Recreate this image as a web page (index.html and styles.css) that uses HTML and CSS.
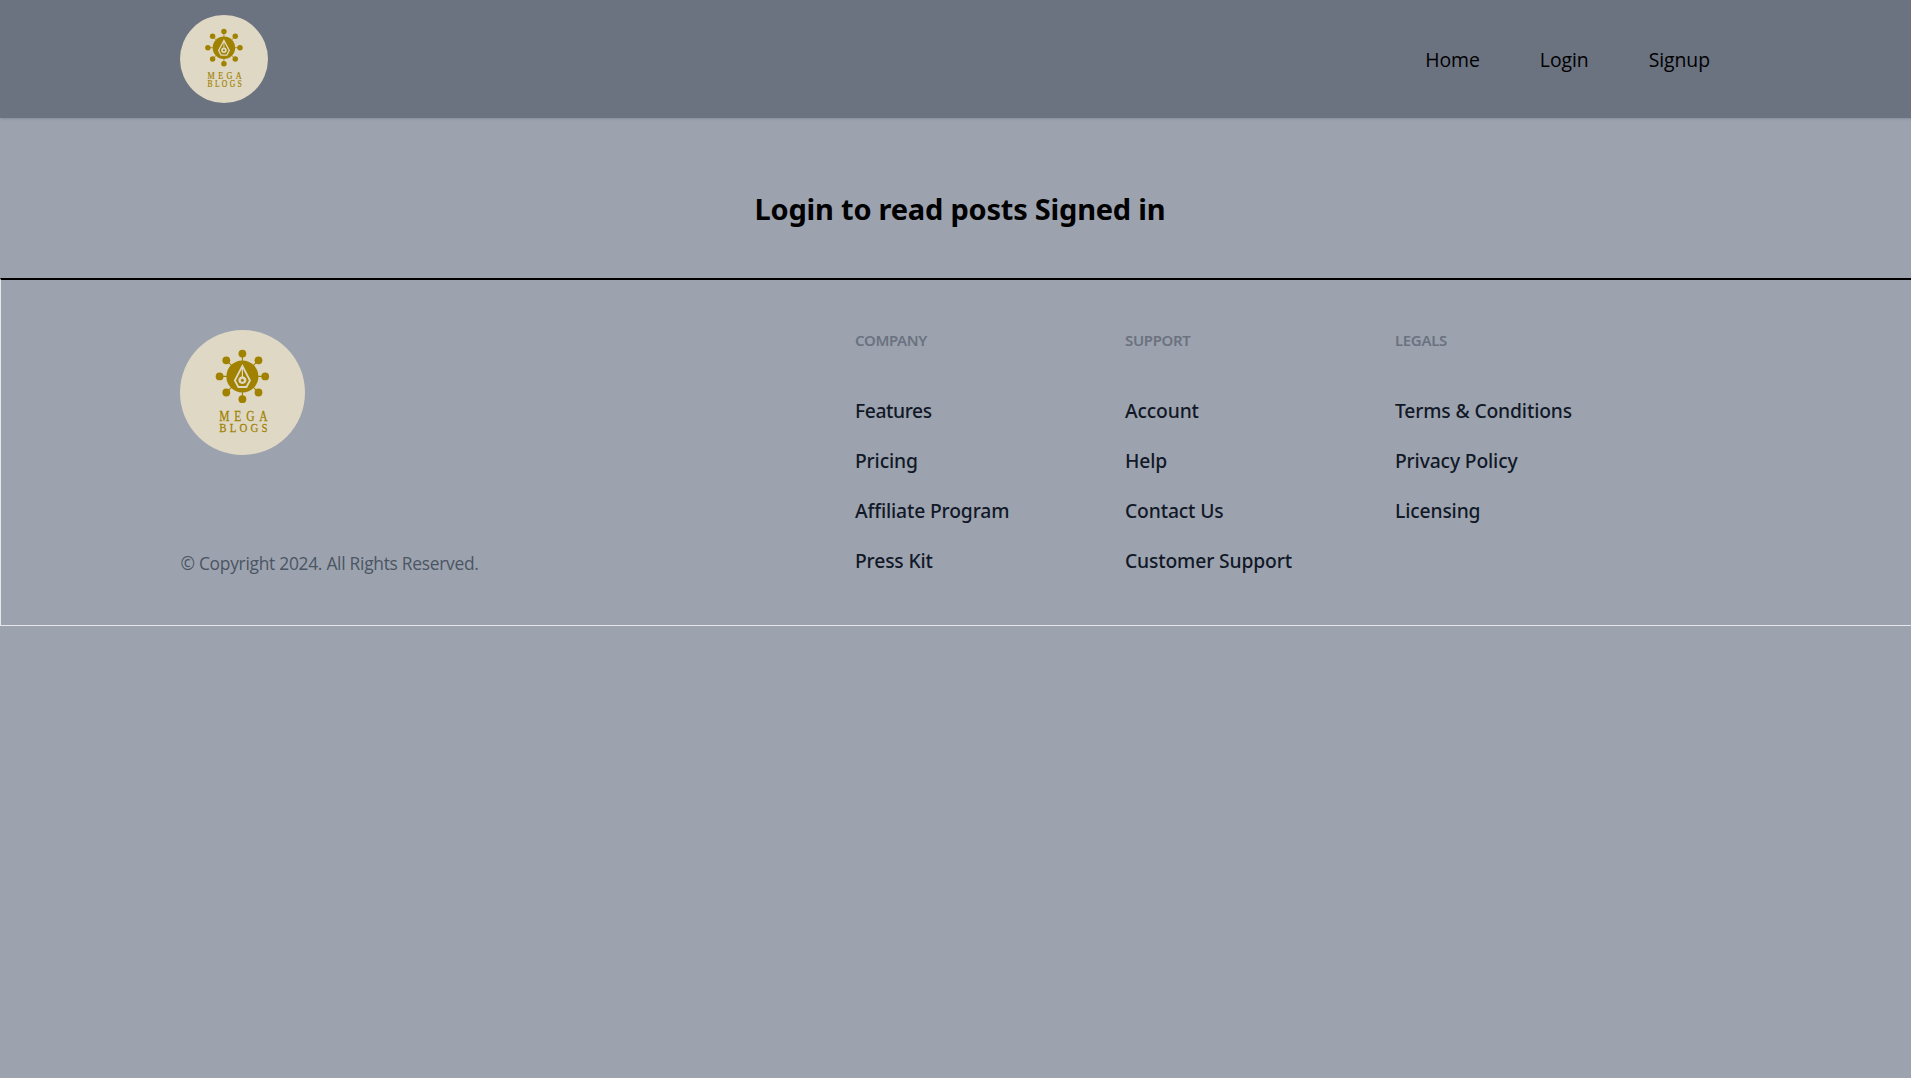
FILE: index.html
```html
<!DOCTYPE html>
<html lang="en">
<head>
<meta charset="utf-8">
<title>Mega Blogs</title>
<link rel="stylesheet" href="styles.css">
</head>
<body>
<div class="page">
  <header class="header">
    <div class="container bar">
      <a class="brand"><svg class="logo-small" viewBox="0 0 125 125"><use href="#logo"/></svg></a>
      <nav class="nav"><a>Home</a><a>Login</a><a>Signup</a></nav>
    </div>
  </header>
  <main class="main"><h1>Login to read posts Signed in</h1></main>
  <footer class="footer">
    <div class="container columns">
      <div class="about">
        <svg class="logo-large" viewBox="0 0 125 125">
          <g id="logo">
            <circle cx="62.5" cy="62.5" r="62.5" fill="#dfd8c4"/>
            <path fill="none" stroke="#a08200" stroke-width="1.1" d="M62.4 23.5v46M39.4 46.4h46M46.2 30.2l32.4 32.4M78.6 30.2L46.2 62.6"/>
            <g fill="#a08200">
              <circle cx="62.4" cy="46.4" r="16"/>
              <circle cx="62.4" cy="23.6" r="3.9"/><circle cx="62.4" cy="69.2" r="3.9"/>
              <circle cx="39.6" cy="46.4" r="3.9"/><circle cx="85.2" cy="46.4" r="3.9"/>
              <circle cx="46.3" cy="30.3" r="3.9"/><circle cx="78.5" cy="30.3" r="3.9"/>
              <circle cx="46.3" cy="62.5" r="3.9"/><circle cx="78.5" cy="62.5" r="3.9"/>
            </g>
            <path fill="#dfd8c4" d="M62.4 34L71 50.500l-4 7.400h-9.200L53.800 50.500z"/>
            <path fill="#a08200" d="M61.800 39V46.200a4.100 4.100 0 0 0-2.300 6.900l2.900 1 2.900-1a4.100 4.100 0 0 0-2.300-6.900V39L68.900 50.500l-3 5.500h-7L55.900 50.500z"/>
            <circle cx="62.4" cy="50.200" r="3.200" fill="#dfd8c4"/>
            <circle cx="62.4" cy="50.200" r="1.500" fill="#a08200"/>
            <g class="wordmark" transform="scale(.82 1)">
              <text x="47.800" y="91" textLength="59">MEGA</text>
              <text x="47.800" y="102" textLength="59">BLOGS</text>
            </g>
          </g>
        </svg>
        <p>© Copyright 2024. All Rights Reserved.</p>
      </div>
      <section><h3>Company</h3>
        <ul><li class="tight">Features</li><li>Pricing</li><li>Affiliate Program</li><li>Press Kit</li></ul>
      </section>
      <section><h3>Support</h3>
        <ul><li>Account</li><li>Help</li><li>Contact Us</li><li>Customer Support</li></ul>
      </section>
      <section><h3>Legals</h3>
        <ul><li>Terms &amp; Conditions</li><li>Privacy Policy</li><li>Licensing</li></ul>
      </section>
    </div>
  </footer>
</div>
</body>
</html>
```
FILE: styles.css
```css
* { box-sizing: border-box; margin: 0; padding: 0; }
html, body { overflow-x: hidden; }
body {
  min-height: 100vh;
  background: #9ca3af;
  color: #000;
  font: 20px/30px "Open Sans", "Noto Sans", sans-serif;
}
.page { width: calc(100% + 9px); }
.container { width: 1600px; margin: 0 auto; padding: 0 20px; }
.header {
  padding: 15px 0;
  background: #6b7280;
  box-shadow: 0 1px 3px rgba(0, 0, 0, .1), 0 1px 2px -1px rgba(0, 0, 0, .1);
}
.bar { display: flex; align-items: center; justify-content: space-between; }
.brand { display: flex; }
.logo-small { display: block; width: 88px; height: 88px; }
.nav { display: flex; gap: 60px; padding: 2px 30px 0 0; font-size: 19.4px; letter-spacing: -.06px; }
.main { padding: 71px 0 49px; text-align: center; }
.main h1 { font: 700 29px/40px "Noto Sans", sans-serif; letter-spacing: -.22px; }
.footer {
  border: 1px solid #e5e7eb;
  border-top: 2px solid #000;
  padding: 50px 0;
}
.columns { display: grid; grid-template-columns: 675px 270px 270px 270px; }
.about { display: flex; flex-direction: column; justify-content: space-between; }
.logo-large { display: block; width: 125px; height: 125px; }
.about p { padding-left: .5px; color: #4b5563; font-size: 17.4px; line-height: 23px; letter-spacing: -.28px; }
.footer h3 {
  margin-bottom: 46px;
  color: #6b7280;
  font: 600 15px/20px "Noto Sans", sans-serif;
  letter-spacing: -.35px;
  text-transform: uppercase;
}
.footer ul { display: grid; gap: 20px; margin-bottom: -1px; list-style: none; }
.footer li { color: #111827; font: 500 19.3px/30px "Noto Sans", sans-serif; letter-spacing: -.15px; }
.footer li.tight { letter-spacing: -.4px; }
.wordmark { fill: #a08200; stroke: #a08200; stroke-width: .25px; font-family: "Liberation Serif", serif; font-size: 14px; }
.wordmark text + text { font-size: 13.200px; }
```
